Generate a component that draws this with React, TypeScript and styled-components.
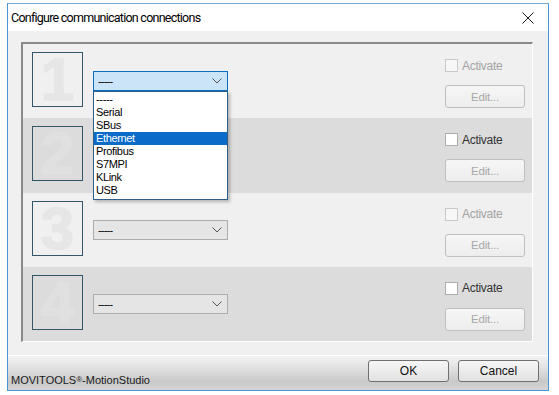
import React from "react";
import styled, { createGlobalStyle } from "styled-components";

const GlobalStyle = createGlobalStyle`
  html, body {
    margin: 0;
    padding: 0;
    background: #ffffff;
  }
  body {
    font-family: "Liberation Sans", Arial, sans-serif;
  }
`;

const options = ["-----", "Serial", "SBus", "Ethernet", "Profibus", "S7MPI", "KLink", "USB"];

interface Slot {
  id: number;
  enabled: boolean;
  open?: boolean;
}

const slots: Slot[] = [
  { id: 1, enabled: false, open: true },
  { id: 2, enabled: true },
  { id: 3, enabled: false },
  { id: 4, enabled: true },
];

const App = () => {
  return (
    <>
      <GlobalStyle />
      <Window>
        <TitleBar>
          <Title>Configure communication connections</Title>
          <CloseButton>
            <svg width="12" height="12" viewBox="0 0 12 12">
              <path d="M0.5 0.5 L11.5 11.5 M11.5 0.5 L0.5 11.5" stroke="#1a1a1a" strokeWidth="1" fill="none" />
            </svg>
          </CloseButton>
        </TitleBar>
        <Client>
          <Panel>
            {slots.map((slot) => (
              <Row key={slot.id} $shaded={slot.id % 2 === 0}>
                <NumberBox>
                  <Digit $shaded={slot.id % 2 === 0}>{slot.id}</Digit>
                </NumberBox>
                <SelectWrap>
                  <Select $open={!!slot.open}>
                    <SelectText>-----</SelectText>
                    <svg width="10" height="6" viewBox="0 0 10 6">
                      <path d="M0.5 0.5 L5 5 L9.5 0.5" stroke="#555" strokeWidth="1" fill="none" />
                    </svg>
                  </Select>
                  {slot.open && (
                    <DropList>
                      {options.map((opt) => (
                        <DropItem key={opt} $selected={opt === "Ethernet"}>
                          {opt}
                        </DropItem>
                      ))}
                    </DropList>
                  )}
                </SelectWrap>
                <Actions>
                  <CheckRow $enabled={slot.enabled}>
                    <CheckBox $enabled={slot.enabled} />
                    Activate
                  </CheckRow>
                  <EditButton>Edit...</EditButton>
                </Actions>
              </Row>
            ))}
          </Panel>
        </Client>
        <StatusBar>
          <StatusText>MOVITOOLS<Reg>®</Reg>-MotionStudio</StatusText>
          <Buttons>
            <DialogButton>OK</DialogButton>
            <DialogButton>Cancel</DialogButton>
          </Buttons>
        </StatusBar>
      </Window>
    </>
  );
};

export default App;

const Window = styled.div`
  margin: 3px 0 0 7px;
  width: 542px;
  height: 388px;
  box-sizing: border-box;
  border: 1px solid #4a93d6;
  border-top-color: #7aa7d3;
  display: flex;
  flex-direction: column;
  background: #f0f0f0;
`;

const TitleBar = styled.div`
  height: 27px;
  background: #ffffff;
  display: flex;
  align-items: center;
  padding: 0 14px 0 3px;
`;

const Title = styled.div`
  font-family: Roboto, "Noto Sans", sans-serif;
  font-size: 12.5px;
  letter-spacing: -0.75px;
  color: #000;
`;

const CloseButton = styled.div`
  margin-left: auto;
  display: flex;
  align-items: center;
`;

const Client = styled.div`
  padding: 11px 15px 13px 13px;
  border-bottom: 1px solid #ffffff;
`;

const Panel = styled.div`
  height: 300px;
  box-sizing: border-box;
  border-top: 2px solid #8a8a8a;
  border-left: 2px solid #8a8a8a;
  border-right: 1px solid #ffffff;
  border-bottom: 1px solid #ffffff;
  display: flex;
  flex-direction: column;
`;

const Row = styled.div<{ $shaded: boolean }>`
  flex: 1;
  min-height: 0;
  box-sizing: border-box;
  background: ${({ $shaded }) => ($shaded ? "#dcdcdc" : "#f0f0f0")};
  display: flex;
  align-items: flex-start;
  padding: 8px 7px 0 9px;
`;

const NumberBox = styled.div`
  width: 51px;
  height: 55px;
  box-sizing: border-box;
  border: 1px solid #34566a;
  text-align: center;
`;

const Digit = styled.span<{ $shaded: boolean }>`
  display: block;
  font-family: "Liberation Sans", Arial, sans-serif;
  font-weight: 700;
  font-size: 60px;
  line-height: 53px;
  color: ${({ $shaded }) => ($shaded ? "#e0e0e0" : "#e6e6e6")};
  -webkit-text-stroke: 1.5px ${({ $shaded }) => ($shaded ? "#e0e0e0" : "#e6e6e6")};
`;

const SelectWrap = styled.div`
  position: relative;
  margin: 19px 0 0 10px;
`;

const Select = styled.div<{ $open: boolean }>`
  width: 135px;
  height: 20px;
  box-sizing: border-box;
  border: 1px solid ${({ $open }) => ($open ? "#0b6fc4" : "#acacac")};
  background: ${({ $open }) => ($open ? "#cce4f7" : "#e5e5e5")};
  display: flex;
  align-items: center;
  justify-content: space-between;
  padding: 0 5px 0 4px;
`;

const SelectText = styled.span`
  font-size: 11px;
  letter-spacing: -0.8px;
  color: #000;
`;

const DropList = styled.div`
  position: absolute;
  top: 20px;
  left: 0;
  z-index: 5;
  width: 135px;
  box-sizing: border-box;
  border: 1px solid #2f5f86;
  background: #ffffff;
  padding: 1px 0 2px;
  box-shadow: 2px 2px 3px rgba(0, 0, 0, 0.25);
`;

const DropItem = styled.div<{ $selected: boolean }>`
  height: 13px;
  line-height: 13px;
  font-size: 11px;
  letter-spacing: -0.35px;
  padding-left: 2px;
  color: ${({ $selected }) => ($selected ? "#ffffff" : "#000000")};
  background: ${({ $selected }) => ($selected ? "#0a6bc8" : "transparent")};
`;

const Actions = styled.div`
  margin: 7px 0 0 auto;
  display: flex;
  flex-direction: column;
  gap: 13px;
`;

const CheckRow = styled.div<{ $enabled: boolean }>`
  height: 13px;
  display: flex;
  align-items: center;
  gap: 4px;
  font-size: 12px;
  letter-spacing: -0.3px;
  color: ${({ $enabled }) => ($enabled ? "#333333" : "#a3a3a3")};
`;

const CheckBox = styled.span<{ $enabled: boolean }>`
  width: 13px;
  height: 13px;
  box-sizing: border-box;
  border: 1px solid ${({ $enabled }) => ($enabled ? "#adadad" : "#c9c9c9")};
  background: ${({ $enabled }) => ($enabled ? "#ffffff" : "#f7f7f7")};
`;

const EditButton = styled.div`
  width: 80px;
  height: 23px;
  box-sizing: border-box;
  border: 1px solid #bfbfbf;
  border-radius: 3px;
  background: linear-gradient(#f6f6f6, #ededed);
  display: flex;
  align-items: center;
  justify-content: center;
  font-size: 11.5px;
  letter-spacing: -0.2px;
  color: #a8a8a8;
`;

const StatusBar = styled.div`
  flex: 1;
  display: flex;
  align-items: flex-start;
  justify-content: space-between;
  padding: 4px 9px 0 3px;
  background: linear-gradient(#f3f3f3 0%, #e4e4e4 30%, #c9c9c9 75%, #d6d6d6 100%);
`;

const StatusText = styled.div`
  margin-top: 14px;
  font-size: 11px;
  color: #1a1a1a;
`;

const Reg = styled.span`
  font-size: 8px;
  vertical-align: 2px;
`;

const Buttons = styled.div`
  display: flex;
  gap: 9px;
`;

const DialogButton = styled.div`
  width: 81px;
  height: 22px;
  box-sizing: border-box;
  border: 1px solid #707070;
  border-radius: 3px;
  background: linear-gradient(#f6f6f6, #e2e2e2);
  display: flex;
  align-items: center;
  justify-content: center;
  font-size: 12px;
  color: #111;
`;
